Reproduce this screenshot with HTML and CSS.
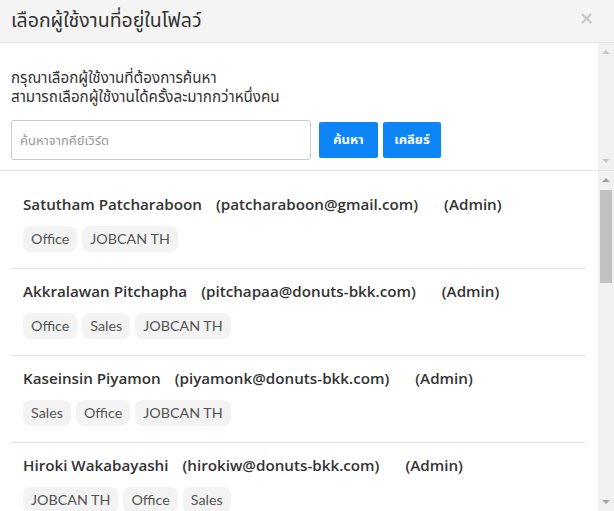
FILE: index.html
```html
<!DOCTYPE html>
<html lang="th">
<head>
<meta charset="utf-8">
<title>เลือกผู้ใช้งานที่อยู่ในโฟลว์</title>
<link rel="stylesheet" href="styles.css">
</head>
<body>
<div class="modal">
  <div class="modal-header">
    <h1 class="modal-title">เลือกผู้ใช้งานที่อยู่ในโฟลว์</h1>
    <span class="close">×</span>
  </div>
  <div class="search-pane">
    <div class="search-body">
      <p class="hint">กรุณาเลือกผู้ใช้งานที่ต้องการค้นหา<br>สามารถเลือกผู้ใช้งานได้ครั้งละมากกว่าหนึ่งคน</p>
      <div class="search-row">
        <input class="search-input" type="text" placeholder="ค้นหาจากคีย์เวิร์ด">
        <button class="btn">ค้นหา</button>
        <button class="btn">เคลียร์</button>
      </div>
    </div>
    <div class="scrollbar">
      <span class="arrow up"></span>
      <span class="track-space"></span>
      <span class="arrow down"></span>
    </div>
  </div>
  <div class="list-pane">
    <ul class="user-list">
      <li class="user">
        <div class="user-name">Satutham Patcharaboon<span class="email">(patcharaboon@gmail.com)</span><span class="role">(Admin)</span></div>
        <div class="tags"><span class="tag">Office</span><span class="tag">JOBCAN TH</span></div>
      </li>
      <li class="user">
        <div class="user-name">Akkralawan Pitchapha<span class="email">(pitchapaa@donuts-bkk.com)</span><span class="role">(Admin)</span></div>
        <div class="tags"><span class="tag">Office</span><span class="tag">Sales</span><span class="tag">JOBCAN TH</span></div>
      </li>
      <li class="user">
        <div class="user-name">Kaseinsin Piyamon<span class="email">(piyamonk@donuts-bkk.com)</span><span class="role">(Admin)</span></div>
        <div class="tags"><span class="tag">Sales</span><span class="tag">Office</span><span class="tag">JOBCAN TH</span></div>
      </li>
      <li class="user">
        <div class="user-name">Hiroki Wakabayashi<span class="email">(hirokiw@donuts-bkk.com)</span><span class="role">(Admin)</span></div>
        <div class="tags"><span class="tag">JOBCAN TH</span><span class="tag">Office</span><span class="tag">Sales</span></div>
      </li>
    </ul>
    <div class="scrollbar">
      <span class="arrow up"></span>
      <span class="thumb"></span>
      <span class="track-space"></span>
      <span class="arrow down"></span>
    </div>
  </div>
</div>
</body>
</html>
```
FILE: styles.css
```css
* { box-sizing: border-box; }
html, body { margin: 0; padding: 0; }
body {
  width: 614px;
  height: 511px;
  overflow: hidden;
  background: #fff;
  font-family: "Lato", "Noto Sans", "Noto Sans Thai", sans-serif;
  color: #333;
}
.modal { display: flex; flex-direction: column; height: 511px; }
.modal-header {
  height: 43px;
  flex: none;
  background: #f4f4f4;
  border-bottom: 1px solid #e3e3e3;
  display: flex;
  align-items: center;
  justify-content: space-between;
  padding: 0 20px 0 11px;
}
.modal-title {
  margin: 0;
  font-size: 19.5px;
  font-weight: normal;
  color: #333;
  font-family: "Noto Sans", "Noto Sans Thai", sans-serif;
}
.close {
  font-family: "DejaVu Sans", sans-serif;
  font-size: 18px;
  font-weight: bold;
  color: #c8c8c8;
  line-height: 1;
  margin-top: -6px;
}
.search-pane {
  height: 128px;
  flex: none;
  display: flex;
  border-bottom: 1px solid #e3e3e3;
}
.search-body { flex: 1; padding: 25px 0 0 11px; }
.hint {
  margin: 0 0 14px;
  font-family: "Noto Sans", "Noto Sans Thai", sans-serif;
  font-size: 15.2px;
  line-height: 19px;
  color: #333;
}
.search-row { display: flex; align-items: center; gap: 5px; }
.search-input {
  width: 300px;
  height: 40px;
  border: 1px solid #ccc;
  border-radius: 2px;
  padding: 0 8px;
  font-family: "Noto Sans", "Noto Sans Thai", sans-serif;
  font-size: 13px;
  color: #333;
  margin-right: 3px;
  outline: none;
}
.search-input::placeholder { color: #999; }
.btn {
  height: 36px;
  padding: 0 10px;
  background: #0d85f6;
  border: 0;
  border-radius: 2px;
  color: #fff;
  font-family: "Noto Sans", "Noto Sans Thai", sans-serif;
  font-size: 13px;
  font-weight: bold;
}
.btn:first-of-type { width: 59px; }
.btn:last-of-type { width: 58px; }
.scrollbar {
  width: 16px;
  flex: none;
  background: #f1f1f1;
  display: flex;
  flex-direction: column;
  align-items: center;
  padding: 5px 0;
}
.track-space { flex: 1; }
.arrow { width: 0; height: 0; border-left: 4px solid transparent; border-right: 4px solid transparent; margin: 2px 0; }
.arrow.up { border-bottom: 4px solid #a3a3a3; }
.arrow.down { border-top: 4px solid #a3a3a3; }
.search-pane .arrow.up { border-bottom-color: #c8c8c8; }
.search-pane .arrow.down { border-top-color: #c8c8c8; }
.thumb { width: 12px; height: 93px; background: #c1c1c1; margin-top: 6px; }
.list-pane { flex: 1; display: flex; overflow: hidden; }
.user-list {
  list-style: none;
  margin: 0;
  padding: 10px 12px 0 11px;
  flex: 1;
  overflow: hidden;
}
.user {
  border-bottom: 1px solid #e3e3e3;
  padding: 13px 0 16px 12px;
}
.user + .user { padding-top: 12px; }
.user-name {
  font-family: "Open Sans", sans-serif;
  font-size: 15.2px;
  font-weight: 600;
  line-height: 20px;
  color: #333;
  margin-bottom: 12px;
  white-space: nowrap;
}
.email { margin-left: 14px; }
.role { margin-left: 26px; }
.tags { display: flex; gap: 5px; }
.tag {
  background: #f3f3f3;
  border-radius: 8px;
  padding: 0 8px;
  height: 26px;
  line-height: 26px;
  font-size: 14.3px;
  color: #555;
}
```
